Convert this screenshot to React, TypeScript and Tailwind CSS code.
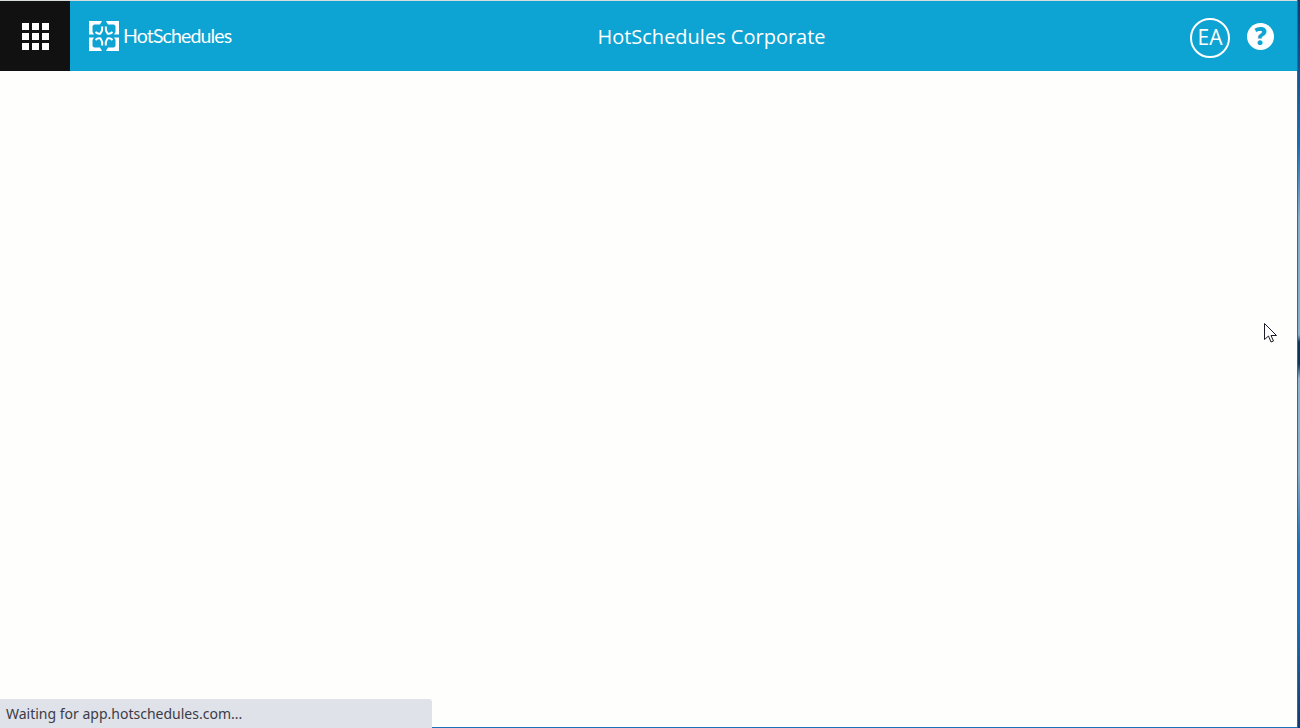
const QUADRANTS = ['', 'matrix(-1 0 0 1 30 0)', 'matrix(1 0 0 -1 0 30)', 'matrix(-1 0 0 -1 30 30)'];

function GridIcon() {
  return (
    <div className="grid grid-cols-3 gap-[3px]">
      {Array.from({ length: 9 }).map((_, i) => (
        <span key={i} className="w-[7px] h-[7px] bg-white" />
      ))}
    </div>
  );
}

function Logo() {
  return (
    <svg width="30" height="30" viewBox="0 0 30 30">
      {QUADRANTS.map((t) => (
        <g key={t} transform={t || undefined}>
          <path d="M0 0H13L11 3.500H5L3.500 5V11L5 13.500H0Z" fill="#fff" />
          <path d="M13.200 5.500C13.500 8 13 10.500 11.500 12.500C9.500 13 8 12.500 6.500 11" fill="none" stroke="#fff" strokeWidth="2" />
        </g>
      ))}
    </svg>
  );
}

function HelpIcon() {
  return (
    <div className="w-[27px] h-[27px] rounded-full bg-white flex items-center justify-center">
      <span className="text-[#0da3d2] text-[24px] leading-none font-extrabold font-['Open_Sans',sans-serif]">?</span>
    </div>
  );
}

function Cursor() {
  return (
    <svg className="absolute left-[1264px] top-[323px]" width="14" height="21" viewBox="0 0 14 21">
      <path d="M0.500 0.500V16.500L4.500 13L7 19L9.500 18L7 12.500H12.500Z" fill="#fff" stroke="#1c1c28" strokeWidth="1" />
    </svg>
  );
}

export default function App() {
  return (
    <div className="relative flex w-[1300px] h-[728px] overflow-hidden bg-[#fefefc] font-['Open_Sans',sans-serif]">
      <div className="flex-1 flex flex-col min-w-0">
        <div className="h-px bg-[#d9dcdc]" />
        <header className="h-[70px] flex items-center bg-[#0da3d2] text-white">
          <div className="w-[70px] h-full bg-[#111111] flex items-center justify-center">
            <GridIcon />
          </div>
          <div className="w-[180px] pl-[19px] flex items-center gap-1">
            <Logo />
            <span className="text-[19.5px] leading-none tracking-[-0.85px] font-['Lato',sans-serif]">HotSchedules</span>
          </div>
          <h1 className="flex-1 text-center text-[20px] pr-[17px] pt-[2px] leading-none">HotSchedules Corporate</h1>
          <div className="flex items-center gap-[17px] pr-[23px]">
            <div className="w-10 h-10 mt-1 rounded-full border-2 border-white flex items-center justify-center text-[21px]">EA</div>
            <HelpIcon />
          </div>
        </header>
        <main className="flex-1" />
        <div className="flex items-end">
          <div className="w-[432px] h-[29px] bg-[#dfe2e9] rounded-tr-[3px] flex items-center pl-[6px] text-[14px] text-[#3c3c46] font-['Noto_Sans',sans-serif]">
            Waiting for app.hotschedules.com...
          </div>
          <div className="flex-1 h-px bg-[#1a6fb8]" />
        </div>
      </div>
      <div className="w-px bg-[#1a6fb8]" />
      <div className="w-[2px] bg-[linear-gradient(to_bottom,#0e3a6e_0%,#1470bc_20%,#7fb0d0_30%,#7fb0d0_46%,#0c3560_47%,#0c3560_50%,#8ab4d2_52%,#7fb0d0_65%,#1470bc_75%,#1470bc_85%,#0e3a6e_100%)]" />
      <Cursor />
    </div>
  );
}
